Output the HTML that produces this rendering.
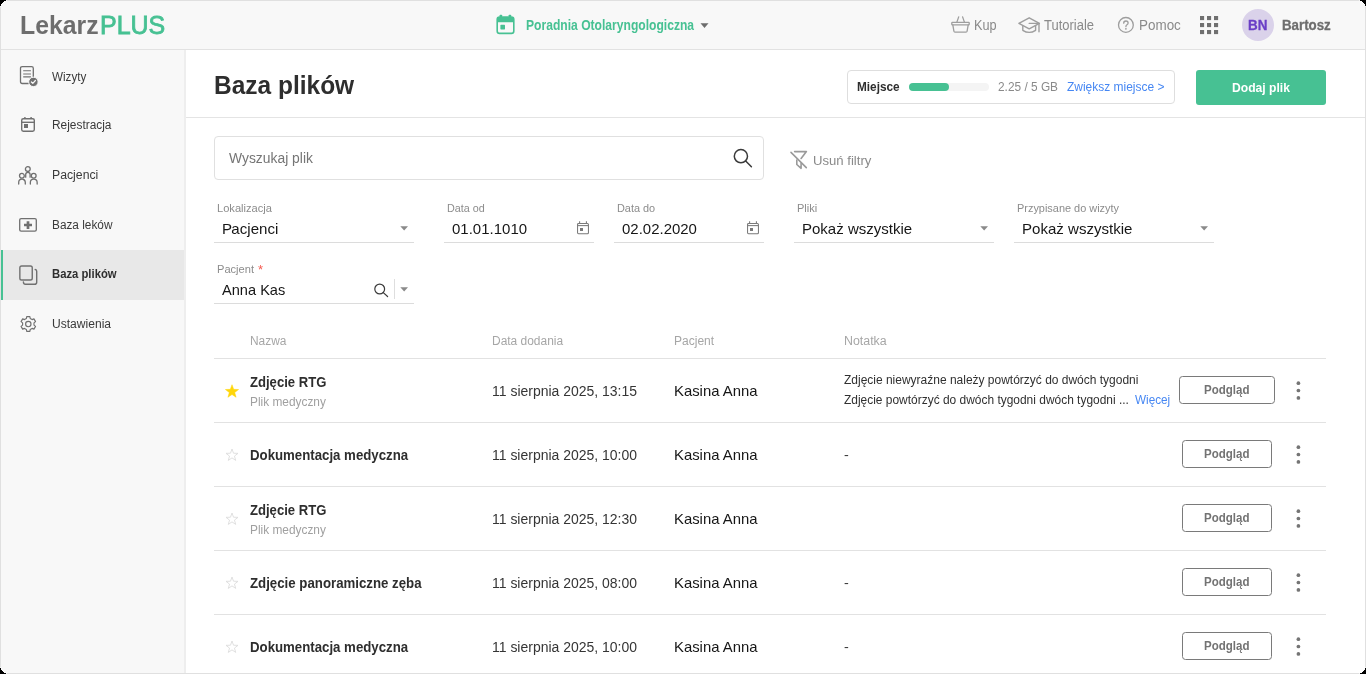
<!DOCTYPE html>
<html lang="pl">
<head>
<meta charset="utf-8">
<title>Baza plików</title>
<style>
*{box-sizing:border-box;margin:0;padding:0}
html,body{width:1366px;height:674px;overflow:hidden;background:#000;font-family:"Liberation Sans",sans-serif;}
#app{will-change:transform;position:absolute;left:0;top:0;width:1366px;height:674px;background:#fff;overflow:hidden;}
#frame{position:absolute;left:0;top:0;width:1366px;height:674px;border:1px solid #e0e0e0;z-index:50;pointer-events:none;}
.cnr{position:absolute;z-index:60;width:8px;height:8px;}
.abs{position:absolute;white-space:nowrap;line-height:1;transform-origin:0 0;}
#topbar{position:absolute;left:0;top:0;width:1366px;height:50px;background:#f8f8f8;border-bottom:1px solid #e2e2e2;}
#sidebar{position:absolute;left:0;top:50px;width:186px;height:624px;background:#f8f8f8;border-right:2px solid #eeeeee;}
#main{position:absolute;left:186px;top:50px;width:1180px;height:624px;background:#fff;}
.ico{position:absolute;overflow:visible;}
.t-act{font-size:14px;color:#8a8a8a;}
.nav{font-size:12px;color:#3a3a3a;}
.lbl{font-size:11px;color:#8c8c8c;}
.val{font-size:15px;color:#161616;}
.ul{position:absolute;height:1px;background:#dcdcdc;}
.th{font-size:12px;color:#a6a6a6;}
.nm{font-size:14px;font-weight:bold;color:#2e2e2e;}
.sub{font-size:12px;color:#a0a0a0;}
.dt{font-size:14px;color:#353535;}
.pt{font-size:15px;color:#161616;}
.nt{font-size:12px;color:#303030;}
.hr{position:absolute;left:214px;width:1112px;height:1px;background:#e2e2e2;}
.btn{position:absolute;border:1px solid #7a7a7a;border-radius:3px;background:#fff;}
.btnt{font-size:12px;font-weight:bold;color:#737373;}
</style>
</head>
<body>
<div id="app">
<div id="topbar">
<div class="abs " id="logo1" style="left:19.90px;top:12.74px;transform:scaleX(0.9919);font-size:25px;font-weight:bold;color:#6e6e6e;">Lekarz</div>
<div class="abs " id="logo2" style="left:99.83px;top:12.74px;transform:scaleX(0.9989);font-size:25px;font-weight:normal;color:#47c193;-webkit-text-stroke:0.8px #47c193;">PLUS</div>
<svg class="ico" style="left:496.00px;top:14.00px" width="19" height="21" viewBox="0 0 19 21" ><rect x="3.7" y="0.7" width="2.4" height="3" rx="0.6" fill="#47c193"/>
<rect x="12.7" y="0.7" width="2.4" height="3" rx="0.6" fill="#47c193"/>
<rect x="1.2" y="3" width="16.6" height="16.4" rx="2.4" fill="none" stroke="#47c193" stroke-width="1.6"/>
<path d="M1.2 5.4 a2.4 2.4 0 0 1 2.4 -2.4 h11.8 a2.4 2.4 0 0 1 2.4 2.4 v2.8 h-16.6 z" fill="#47c193"/>
<rect x="4.4" y="10.8" width="4.6" height="4.6" rx="0.6" fill="#47c193"/></svg>
<div class="abs " id="clinic" style="left:525.78px;top:18.05px;transform:scaleX(0.8644);font-size:14px;font-weight:bold;color:#47c193;">Poradnia Otolaryngologiczna</div>
<svg class="ico" style="left:700.00px;top:23.00px" width="10" height="6" viewBox="0 0 10 6" ><path d="M0.5 0.3 H8.5 L4.5 5 Z" fill="#6d6d6d"/></svg>
<svg class="ico" style="left:950.00px;top:14.00px" width="22" height="20" viewBox="0 0 22 20" fill="none" stroke="#9e9e9e" stroke-width="1.3" stroke-linejoin="round" stroke-linecap="round"><path d="M6.8 8.4 L8.7 2.9 M14.5 8.4 L12.6 2.9"/>
<rect x="1.8" y="8.4" width="17.4" height="2.5" rx="0.6"/>
<path d="M2.8 10.9 L3.9 17.2 Q4.1 18.1 5 18.1 H16 Q16.9 18.1 17.1 17.2 L18.2 10.9"/></svg>
<div class="abs t-act" id="kup" style="left:973.50px;top:18.05px;transform:scaleX(0.9076);">Kup</div>
<svg class="ico" style="left:1017.00px;top:16.00px" width="26" height="20" viewBox="0 0 26 20" fill="none" stroke="#9e9e9e" stroke-width="1.4" stroke-linejoin="round" stroke-linecap="round"><path d="M1.9 7.4 L12.2 1.8 L22.4 7.4 L12.2 12.9 Z"/>
<path d="M5.8 9.8 V14.3 Q12.2 18.4 18.6 14.3 V9.8"/>
<path d="M12.2 7.4 H22 V15.8"/></svg>
<div class="abs t-act" id="tut" style="left:1044.08px;top:18.05px;transform:scaleX(0.9268);">Tutoriale</div>
<svg class="ico" style="left:1116.00px;top:16.00px" width="20" height="20" viewBox="0 0 20 20" ><circle cx="9.9" cy="8.9" r="7.4" fill="none" stroke="#9e9e9e" stroke-width="1.3"/>
<path d="M7.7 7.2 Q7.7 5 9.9 5 Q12.1 5 12.1 7 Q12.1 8.1 11 8.8 Q9.9 9.5 9.9 10.7" fill="none" stroke="#9e9e9e" stroke-width="1.3" stroke-linecap="round"/>
<circle cx="9.9" cy="12.8" r="0.9" fill="#9e9e9e"/></svg>
<div class="abs t-act" id="pomoc" style="left:1138.73px;top:18.05px;transform:scaleX(0.9604);">Pomoc</div>
<svg class="ico" style="left:1199.00px;top:15.00px" width="20" height="20" viewBox="0 0 20 20" fill="#707070"><rect x="1" y="1" width="4.1" height="4.1"/><rect x="8" y="1" width="4.1" height="4.1"/><rect x="15" y="1" width="4.1" height="4.1"/><rect x="1" y="8" width="4.1" height="4.1"/><rect x="8" y="8" width="4.1" height="4.1"/><rect x="15" y="8" width="4.1" height="4.1"/><rect x="1" y="15" width="4.1" height="4.1"/><rect x="8" y="15" width="4.1" height="4.1"/><rect x="15" y="15" width="4.1" height="4.1"/></svg>
<div class="abs" style="left:1242.00px;top:9.00px;width:32px;height:32px;border-radius:50%;background:#dad2ea;"></div>
<div class="abs " id="bn" style="left:1247.74px;top:18.05px;transform:scaleX(0.9599);font-size:14px;font-weight:bold;color:#6a3fc6;-webkit-text-stroke:0.3px #6a3fc6;">BN</div>
<div class="abs " id="bartosz" style="left:1281.65px;top:18.05px;transform:scaleX(0.9495);font-size:14px;font-weight:bold;color:#6e6e6e;-webkit-text-stroke:0.3px #6e6e6e;">Bartosz</div>
</div>
<div id="sidebar">
<div class="abs" style="left:0.00px;top:200.00px;width:184px;height:50px;background:#e8e8e8;"></div>
<div class="abs" style="left:1.00px;top:200.00px;width:2px;height:50px;background:#47c193;"></div>
<svg class="ico" style="left:19.00px;top:15.00px" width="20" height="22" viewBox="0 0 20 22" fill="none" stroke="#707070" stroke-width="1.3"><path d="M9.4 18.5 H3.2 Q1.5 18.5 1.5 16.8 V3.3 Q1.5 1.6 3.2 1.6 H12.6 Q14.3 1.6 14.3 3.3 V11.8" stroke-linecap="round"/>
<path d="M4.2 5.7 H11.9 M4.2 9 H11.9 M4.2 11.9 H11.9" stroke-width="1.1"/>
<circle cx="14.4" cy="16.9" r="4.7" fill="#707070" stroke="#f8f8f8" stroke-width="1"/>
<path d="M12.4 17 L13.8 18.4 L16.4 15.5" stroke="#f8f8f8" stroke-width="1.2" stroke-linecap="round" stroke-linejoin="round"/></svg>
<svg class="ico" style="left:20.00px;top:66.00px" width="17" height="17" viewBox="0 0 17 17" fill="none" stroke="#707070" stroke-width="1.4"><rect x="1.7" y="2.7" width="12.6" height="12.5" rx="1.6"/>
<path d="M1.7 6.3 H14.3"/>
<path d="M4.9 1 V3 M11.1 1 V3"/>
<rect x="4" y="8" width="4" height="4" fill="#707070" stroke="none"/></svg>
<svg class="ico" style="left:17.00px;top:115.00px" width="22" height="20" viewBox="0 0 22 20" fill="none" stroke="#707070" stroke-width="1.3" stroke-linecap="round"><circle cx="10.8" cy="4.1" r="2.4"/>
<circle cx="4.9" cy="10.8" r="2.4"/>
<circle cx="16.7" cy="10.7" r="2.4"/>
<path d="M1.7 19 V17.5 A3.3 3.3 0 0 1 8.3 17.5 V19"/>
<path d="M13.35 19 V17.6 A3.4 3.4 0 0 1 20.15 17.6 V19"/>
<path d="M8.7 12.2 V9.6 A2.2 2.2 0 0 1 13.1 9.6 V12.2"/></svg>
<svg class="ico" style="left:18.00px;top:167.00px" width="20" height="16" viewBox="0 0 20 16" fill="none" stroke="#707070" stroke-width="1.3"><rect x="1.7" y="1.7" width="16.6" height="12.5" rx="1.4"/>
<path d="M10 4.2 V11.9 M6 8 H14" stroke-width="2.7"/></svg>
<svg class="ico" style="left:18.00px;top:214.00px" width="20" height="22" viewBox="0 0 20 22" fill="none" stroke="#707070" stroke-width="1.4" stroke-linecap="round"><rect x="1.85" y="1.95" width="12.4" height="14" rx="1.8"/>
<path d="M5.4 18 Q5.5 20.3 7.4 20.3 H16.6 Q18.7 20.3 18.7 18.2 V7.2 Q18.7 5.6 17.2 5.5"/></svg>
<svg class="ico" style="left:20.00px;top:265.00px" width="17" height="18" viewBox="0 0 17 18" fill="none" stroke="#707070" stroke-width="1.15" stroke-linejoin="round"><path d="M6.72 1.57 L9.88 1.57 L10.21 3.52 L12.09 4.61 L13.95 3.91 L15.53 6.65 L14.00 7.91 L14.00 10.09 L15.53 11.35 L13.95 14.09 L12.09 13.39 L10.21 14.48 L9.88 16.43 L6.72 16.43 L6.39 14.48 L4.51 13.39 L2.65 14.09 L1.07 11.35 L2.60 10.09 L2.60 7.91 L1.07 6.65 L2.65 3.91 L4.51 4.61 L6.39 3.52 Z"/><circle cx="8.3" cy="9" r="2.7"/></svg>
<div class="abs nav" id="n1" style="left:52.20px;top:20.74px;transform:scaleX(0.9697);">Wizyty</div>
<div class="abs nav" id="n2" style="left:51.99px;top:68.74px;transform:scaleX(0.9904);">Rejestracja</div>
<div class="abs nav" id="n3" style="left:52.01px;top:118.74px;transform:scaleX(1.0208);">Pacjenci</div>
<div class="abs nav" id="n4" style="left:51.89px;top:168.74px;transform:scaleX(0.9844);">Baza leków</div>
<div class="abs nav" id="n5" style="left:51.76px;top:217.74px;transform:scaleX(0.9401);font-weight:bold;color:#2e2e2e;">Baza plików</div>
<div class="abs nav" id="n6" style="left:51.99px;top:267.74px;transform:scaleX(1.0059);">Ustawienia</div>
</div>
<div id="main">
<div class="abs " id="title" style="left:27.55px;top:22.74px;transform:scaleX(0.9796);font-size:25px;font-weight:bold;color:#2e2e2e;">Baza plików</div>
<div class="abs" style="left:0.00px;top:67.00px;width:1180px;height:1px;background:#e4e4e4;"></div>
<div class="abs" style="left:661.00px;top:20.00px;width:328px;height:34px;border:1px solid #dedede;border-radius:4px;"></div>
<div class="abs" style="left:723.00px;top:33.00px;width:80px;height:8px;border-radius:4px;background:#f4f4f4;"></div>
<div class="abs" style="left:723.00px;top:33.00px;width:40px;height:8px;border-radius:4px;background:#47c193;"></div>
<div class="abs " id="miejsce" style="left:670.95px;top:30.74px;transform:scaleX(0.9834);font-size:12px;font-weight:bold;color:#2e2e2e;">Miejsce</div>
<div class="abs " id="gb" style="left:811.52px;top:30.74px;transform:scaleX(0.9887);font-size:12px;color:#8a8a8a;">2.25 / 5 GB</div>
<div class="abs " id="zw" style="left:880.80px;top:30.74px;transform:scaleX(0.9974);font-size:12px;color:#4687f3;">Zwiększ miejsce &gt;</div>
<div class="abs" style="left:1010.00px;top:20.00px;width:130px;height:35px;border-radius:3px;background:#47c193;"></div>
<div class="abs " id="dodaj" style="left:1045.60px;top:30.90px;transform:scaleX(0.9333);font-size:13px;font-weight:bold;color:#fff;">Dodaj plik</div>
<div class="abs" style="left:28.00px;top:86.00px;width:550px;height:44px;border:1px solid #e0e0e0;border-radius:4px;"></div>
<div class="abs " id="wysz" style="left:43.49px;top:101.05px;transform:scaleX(0.9913);font-size:14px;color:#757575;">Wyszukaj plik</div>
<svg class="ico" style="left:547.00px;top:98.00px" width="20" height="20" viewBox="0 0 20 20" fill="none" stroke="#3a3a3a" stroke-width="1.5" stroke-linecap="round"><circle cx="7.9" cy="8.2" r="6.6"/><path d="M12.7 13 L18.4 18.7"/></svg>
<svg class="ico" style="left:604.00px;top:100.00px" width="18" height="20" viewBox="0 0 18 20" fill="none" stroke="#9a9a9a" stroke-width="1.6" stroke-linejoin="round" stroke-linecap="round"><path d="M4.6 1.6 H16.4 L11.1 8.5"/>
<path d="M6.8 10 V14.5 L11.1 18.3 V13.2"/>
<path d="M1 2.4 L16.3 17.6"/></svg>
<div class="abs " id="usun" style="left:626.94px;top:103.90px;transform:scaleX(1.0094);font-size:13px;color:#8a8a8a;">Usuń filtry</div>
<div class="abs lbl" id="l1" style="left:31.14px;top:152.59px;transform:scaleX(1.0101);">Lokalizacja</div>
<div class="abs val" id="v1" style="left:36.00px;top:171.20px;transform:scaleX(1.0050);"><span style="letter-spacing:-0.7px">P</span>acjenci</div>
<svg class="ico" style="left:214.00px;top:176.10px" width="9" height="5" viewBox="0 0 9 5" ><path d="M0.3 0.2 H8 L4.15 4.5 Z" fill="#8a8a8a"/></svg>
<div class="abs" style="left:28.00px;top:192.00px;width:200px;height:1px;background:#dcdcdc;"></div>
<div class="abs lbl" id="l2" style="left:260.90px;top:152.59px;transform:scaleX(0.9807);">Data od</div>
<div class="abs val" id="v2" style="left:265.54px;top:171.20px;transform:scaleX(0.9998);">01.01.1010</div>
<svg class="ico" style="left:391.00px;top:171.00px" width="13" height="14" viewBox="0 0 13 14" fill="none" stroke="#7a7a7a" stroke-width="1.05"><rect x="0.55" y="2.4" width="10.9" height="10.3" rx="1"/><path d="M0.55 4.6 H11.45"/><path d="M2.6 0.2 V2.4 M9.4 0.2 V2.4"/><rect x="3" y="7" width="3" height="3" fill="#7a7a7a" stroke="none"/></svg>
<div class="abs" style="left:258.00px;top:192.00px;width:150px;height:1px;background:#dcdcdc;"></div>
<div class="abs lbl" id="l3" style="left:430.84px;top:152.59px;transform:scaleX(0.9909);">Data do</div>
<div class="abs val" id="v3" style="left:436.17px;top:171.20px;transform:scaleX(0.9982);">02.02.2020</div>
<svg class="ico" style="left:561.00px;top:171.00px" width="13" height="14" viewBox="0 0 13 14" fill="none" stroke="#7a7a7a" stroke-width="1.05"><rect x="0.55" y="2.4" width="10.9" height="10.3" rx="1"/><path d="M0.55 4.6 H11.45"/><path d="M2.6 0.2 V2.4 M9.4 0.2 V2.4"/><rect x="3" y="7" width="3" height="3" fill="#7a7a7a" stroke="none"/></svg>
<div class="abs" style="left:428.00px;top:192.00px;width:150px;height:1px;background:#dcdcdc;"></div>
<div class="abs lbl" id="l4" style="left:610.70px;top:152.59px;transform:scaleX(1.0032);">Pliki</div>
<div class="abs val" id="v4" style="left:616.20px;top:171.20px;transform:scaleX(1.0005);">Pokaż wszystkie</div>
<svg class="ico" style="left:794.20px;top:176.10px" width="9" height="5" viewBox="0 0 9 5" ><path d="M0.3 0.2 H8 L4.15 4.5 Z" fill="#8a8a8a"/></svg>
<div class="abs" style="left:608.00px;top:192.00px;width:200px;height:1px;background:#dcdcdc;"></div>
<div class="abs lbl" id="l5" style="left:830.80px;top:152.59px;transform:scaleX(0.9934);">Przypisane do wizyty</div>
<div class="abs val" id="v5" style="left:836.21px;top:171.20px;transform:scaleX(1.0035);">Pokaż wszystkie</div>
<svg class="ico" style="left:1014.20px;top:176.10px" width="9" height="5" viewBox="0 0 9 5" ><path d="M0.3 0.2 H8 L4.15 4.5 Z" fill="#8a8a8a"/></svg>
<div class="abs" style="left:828.00px;top:192.00px;width:200px;height:1px;background:#dcdcdc;"></div>
<div class="abs lbl" id="l6" style="left:31.14px;top:213.59px;transform:scaleX(1.0084);">Pacjent</div>
<div class="abs lbl" id="l6a" style="left:72.10px;top:213.40px;color:#f55a50;font-size:13px;">*</div>
<div class="abs val" id="v6" style="left:35.91px;top:232.20px;transform:scaleX(0.9728);">Anna Kas</div>
<svg class="ico" style="left:188.00px;top:232.50px" width="15" height="14" viewBox="0 0 15 14" fill="none" stroke="#3a3a3a" stroke-width="1.2" stroke-linecap="round"><circle cx="5.7" cy="6" r="4.9"/><path d="M9.3 9.6 L13.6 13.5"/></svg>
<div class="abs" style="left:208.00px;top:229.00px;width:1px;height:20px;background:#dedede;"></div>
<svg class="ico" style="left:214.00px;top:236.80px" width="9" height="5" viewBox="0 0 9 5" ><path d="M0.3 0.2 H8 L4.15 4.5 Z" fill="#8a8a8a"/></svg>
<div class="abs" style="left:28.00px;top:253.00px;width:200px;height:1px;background:#dcdcdc;"></div>
<div class="abs th" id="h1" style="left:64.16px;top:284.74px;transform:scaleX(0.9932);">Nazwa</div>
<div class="abs th" id="h2" style="left:306.16px;top:284.74px;transform:scaleX(0.9963);">Data dodania</div>
<div class="abs th" id="h3" style="left:488.06px;top:284.74px;transform:scaleX(1.0021);">Pacjent</div>
<div class="abs th" id="h4" style="left:658.08px;top:284.74px;transform:scaleX(1.0325);">Notatka</div>
<div class="abs" style="left:28.00px;top:308.00px;width:1112px;height:1px;background:#e2e2e2;"></div>
<div class="abs" style="left:28.00px;top:372.00px;width:1112px;height:1px;background:#e2e2e2;"></div>
<svg class="ico" style="left:38.00px;top:332.00px" width="16" height="16" viewBox="0 0 16 16" ><path d="M8.00 2.70 L9.67 7.34 L14.61 7.50 L10.71 10.53 L12.09 15.27 L8.00 12.50 L3.91 15.27 L5.29 10.53 L1.39 7.50 L6.33 7.34 Z" fill="#ffd60a" stroke="#ffd60a" stroke-width="0.5" stroke-linejoin="round"/></svg>
<div class="abs nm" id="r0n" style="left:63.70px;top:325.05px;transform:scaleX(0.9341);">Zdjęcie RTG</div>
<div class="abs sub" id="r0s" style="left:64.13px;top:345.74px;transform:scaleX(0.9892);">Plik medyczny</div>
<div class="abs dt" id="r0d" style="left:305.68px;top:334.05px;transform:scaleX(0.9983);">11 sierpnia 2025, 13:15</div>
<div class="abs pt" id="r0p" style="left:488.36px;top:333.20px;transform:scaleX(0.9906);">Kasina Anna</div>
<div class="abs nt" id="r0t1" style="left:658.38px;top:323.74px;transform:scaleX(0.9986);">Zdjęcie niewyraźne należy powtórzyć do dwóch tygodni</div>
<div class="abs nt" id="r0t2" style="left:658.38px;top:343.74px;transform:scaleX(0.9956);">Zdjęcie powtórzyć do dwóch tygodni dwóch tygodni ...</div>
<div class="abs nt" id="r0t3" style="left:948.78px;top:343.74px;transform:scaleX(0.9777);color:#4687f3;">Więcej</div>
<div class="abs" style="left:993.00px;top:326.00px;width:95.5px;height:28px;border:1px solid #7a7a7a;border-radius:3.5px;"></div>
<div class="abs btnt" id="r0b" style="left:1017.94px;top:333.74px;transform:scaleX(0.9603);">Podgląd</div>
<svg class="ico" style="left:1109.00px;top:330.00px" width="7" height="20" viewBox="0 0 7 20" fill="#757575"><circle cx="3.4" cy="3.2" r="1.85"/><circle cx="3.4" cy="10.5" r="1.85"/><circle cx="3.4" cy="17.9" r="1.85"/></svg>
<div class="abs" style="left:28.00px;top:436.00px;width:1112px;height:1px;background:#e2e2e2;"></div>
<svg class="ico" style="left:38.00px;top:396.00px" width="16" height="16" viewBox="0 0 16 16" ><path d="M8.00 3.00 L9.52 7.21 L13.99 7.35 L10.46 10.10 L11.70 14.40 L8.00 11.88 L4.30 14.40 L5.54 10.10 L2.01 7.35 L6.48 7.21 Z" fill="none" stroke="#dcdcdc" stroke-width="0.9" stroke-linejoin="round"/></svg>
<div class="abs nm" id="r1n" style="left:63.94px;top:398.05px;transform:scaleX(0.9451);">Dokumentacja medyczna</div>
<div class="abs dt" id="r1d" style="left:305.68px;top:398.05px;transform:scaleX(0.9980);">11 sierpnia 2025, 10:00</div>
<div class="abs pt" id="r1p" style="left:488.36px;top:397.20px;transform:scaleX(0.9906);">Kasina Anna</div>
<div class="abs nt" id="r1t1" style="left:658.32px;top:399.34px;transform:scaleX(1.1936);">-</div>
<div class="abs" style="left:996.00px;top:390.00px;width:90px;height:28px;border:1px solid #7a7a7a;border-radius:3.5px;"></div>
<div class="abs btnt" id="r1b" style="left:1017.94px;top:397.74px;transform:scaleX(0.9603);">Podgląd</div>
<svg class="ico" style="left:1109.00px;top:394.00px" width="7" height="20" viewBox="0 0 7 20" fill="#757575"><circle cx="3.4" cy="3.2" r="1.85"/><circle cx="3.4" cy="10.5" r="1.85"/><circle cx="3.4" cy="17.9" r="1.85"/></svg>
<div class="abs" style="left:28.00px;top:500.00px;width:1112px;height:1px;background:#e2e2e2;"></div>
<svg class="ico" style="left:38.00px;top:460.00px" width="16" height="16" viewBox="0 0 16 16" ><path d="M8.00 3.00 L9.52 7.21 L13.99 7.35 L10.46 10.10 L11.70 14.40 L8.00 11.88 L4.30 14.40 L5.54 10.10 L2.01 7.35 L6.48 7.21 Z" fill="none" stroke="#dcdcdc" stroke-width="0.9" stroke-linejoin="round"/></svg>
<div class="abs nm" id="r2n" style="left:63.70px;top:453.05px;transform:scaleX(0.9341);">Zdjęcie RTG</div>
<div class="abs sub" id="r2s" style="left:64.13px;top:473.74px;transform:scaleX(0.9892);">Plik medyczny</div>
<div class="abs dt" id="r2d" style="left:305.68px;top:462.05px;transform:scaleX(0.9980);">11 sierpnia 2025, 12:30</div>
<div class="abs pt" id="r2p" style="left:488.36px;top:461.20px;transform:scaleX(0.9906);">Kasina Anna</div>
<div class="abs" style="left:996.00px;top:454.00px;width:90px;height:28px;border:1px solid #7a7a7a;border-radius:3.5px;"></div>
<div class="abs btnt" id="r2b" style="left:1017.94px;top:461.74px;transform:scaleX(0.9603);">Podgląd</div>
<svg class="ico" style="left:1109.00px;top:458.00px" width="7" height="20" viewBox="0 0 7 20" fill="#757575"><circle cx="3.4" cy="3.2" r="1.85"/><circle cx="3.4" cy="10.5" r="1.85"/><circle cx="3.4" cy="17.9" r="1.85"/></svg>
<div class="abs" style="left:28.00px;top:564.00px;width:1112px;height:1px;background:#e2e2e2;"></div>
<svg class="ico" style="left:38.00px;top:524.00px" width="16" height="16" viewBox="0 0 16 16" ><path d="M8.00 3.00 L9.52 7.21 L13.99 7.35 L10.46 10.10 L11.70 14.40 L8.00 11.88 L4.30 14.40 L5.54 10.10 L2.01 7.35 L6.48 7.21 Z" fill="none" stroke="#dcdcdc" stroke-width="0.9" stroke-linejoin="round"/></svg>
<div class="abs nm" id="r3n" style="left:64.21px;top:526.05px;transform:scaleX(0.9465);">Zdjęcie panoramiczne zęba</div>
<div class="abs dt" id="r3d" style="left:305.68px;top:526.05px;transform:scaleX(0.9980);">11 sierpnia 2025, 08:00</div>
<div class="abs pt" id="r3p" style="left:488.36px;top:525.20px;transform:scaleX(0.9906);">Kasina Anna</div>
<div class="abs nt" id="r3t1" style="left:658.32px;top:527.34px;transform:scaleX(1.1936);">-</div>
<div class="abs" style="left:996.00px;top:518.00px;width:90px;height:28px;border:1px solid #7a7a7a;border-radius:3.5px;"></div>
<div class="abs btnt" id="r3b" style="left:1017.94px;top:525.74px;transform:scaleX(0.9603);">Podgląd</div>
<svg class="ico" style="left:1109.00px;top:522.00px" width="7" height="20" viewBox="0 0 7 20" fill="#757575"><circle cx="3.4" cy="3.2" r="1.85"/><circle cx="3.4" cy="10.5" r="1.85"/><circle cx="3.4" cy="17.9" r="1.85"/></svg>
<div class="abs" style="left:28.00px;top:628.00px;width:1112px;height:1px;background:#e2e2e2;"></div>
<svg class="ico" style="left:38.00px;top:588.00px" width="16" height="16" viewBox="0 0 16 16" ><path d="M8.00 3.00 L9.52 7.21 L13.99 7.35 L10.46 10.10 L11.70 14.40 L8.00 11.88 L4.30 14.40 L5.54 10.10 L2.01 7.35 L6.48 7.21 Z" fill="none" stroke="#dcdcdc" stroke-width="0.9" stroke-linejoin="round"/></svg>
<div class="abs nm" id="r4n" style="left:63.94px;top:590.05px;transform:scaleX(0.9451);">Dokumentacja medyczna</div>
<div class="abs dt" id="r4d" style="left:305.68px;top:590.05px;transform:scaleX(0.9980);">11 sierpnia 2025, 10:00</div>
<div class="abs pt" id="r4p" style="left:488.36px;top:589.20px;transform:scaleX(0.9906);">Kasina Anna</div>
<div class="abs nt" id="r4t1" style="left:658.32px;top:591.34px;transform:scaleX(1.1936);">-</div>
<div class="abs" style="left:996.00px;top:582.00px;width:90px;height:28px;border:1px solid #7a7a7a;border-radius:3.5px;"></div>
<div class="abs btnt" id="r4b" style="left:1017.94px;top:589.74px;transform:scaleX(0.9603);">Podgląd</div>
<svg class="ico" style="left:1109.00px;top:586.00px" width="7" height="20" viewBox="0 0 7 20" fill="#757575"><circle cx="3.4" cy="3.2" r="1.85"/><circle cx="3.4" cy="10.5" r="1.85"/><circle cx="3.4" cy="17.9" r="1.85"/></svg>
</div>
<div id="frame"></div>
<svg class="cnr" style="left:0;top:0" width="8" height="8" viewBox="0 0 8 8" shape-rendering="crispEdges"><g transform="translate(0,0) scale(1,1)"><rect x="0" y="0" width="6" height="1" fill="#000"/><rect x="0" y="1" width="4" height="1" fill="#000"/><rect x="0" y="2" width="3" height="1" fill="#000"/><rect x="0" y="3" width="2" height="1" fill="#000"/><rect x="0" y="4" width="1" height="1" fill="#000"/><rect x="0" y="5" width="1" height="1" fill="#000"/><rect x="4" y="1" width="1" height="1" fill="#fdfdfd"/><rect x="3" y="2" width="1" height="1" fill="#fdfdfd"/><rect x="2" y="3" width="1" height="1" fill="#fdfdfd"/><rect x="1" y="4" width="1" height="1" fill="#fdfdfd"/><rect x="6" y="0" width="1" height="1" fill="#f2f2f2"/><rect x="0" y="6" width="1" height="1" fill="#f2f2f2"/></g></svg><svg class="cnr" style="right:0;top:0" width="8" height="8" viewBox="0 0 8 8" shape-rendering="crispEdges"><g transform="translate(8,0) scale(-1,1)"><rect x="0" y="0" width="6" height="1" fill="#000"/><rect x="0" y="1" width="4" height="1" fill="#000"/><rect x="0" y="2" width="3" height="1" fill="#000"/><rect x="0" y="3" width="2" height="1" fill="#000"/><rect x="0" y="4" width="1" height="1" fill="#000"/><rect x="0" y="5" width="1" height="1" fill="#000"/><rect x="4" y="1" width="1" height="1" fill="#fdfdfd"/><rect x="3" y="2" width="1" height="1" fill="#fdfdfd"/><rect x="2" y="3" width="1" height="1" fill="#fdfdfd"/><rect x="1" y="4" width="1" height="1" fill="#fdfdfd"/><rect x="6" y="0" width="1" height="1" fill="#f2f2f2"/><rect x="0" y="6" width="1" height="1" fill="#f2f2f2"/></g></svg><svg class="cnr" style="left:0;bottom:0" width="8" height="8" viewBox="0 0 8 8" shape-rendering="crispEdges"><g transform="translate(0,8) scale(1,-1)"><rect x="0" y="0" width="6" height="1" fill="#000"/><rect x="0" y="1" width="4" height="1" fill="#000"/><rect x="0" y="2" width="3" height="1" fill="#000"/><rect x="0" y="3" width="2" height="1" fill="#000"/><rect x="0" y="4" width="1" height="1" fill="#000"/><rect x="0" y="5" width="1" height="1" fill="#000"/><rect x="4" y="1" width="1" height="1" fill="#fdfdfd"/><rect x="3" y="2" width="1" height="1" fill="#fdfdfd"/><rect x="2" y="3" width="1" height="1" fill="#fdfdfd"/><rect x="1" y="4" width="1" height="1" fill="#fdfdfd"/><rect x="6" y="0" width="1" height="1" fill="#f2f2f2"/><rect x="0" y="6" width="1" height="1" fill="#f2f2f2"/></g></svg><svg class="cnr" style="right:0;bottom:0" width="8" height="8" viewBox="0 0 8 8" shape-rendering="crispEdges"><g transform="translate(8,8) scale(-1,-1)"><rect x="0" y="0" width="6" height="1" fill="#000"/><rect x="0" y="1" width="4" height="1" fill="#000"/><rect x="0" y="2" width="3" height="1" fill="#000"/><rect x="0" y="3" width="2" height="1" fill="#000"/><rect x="0" y="4" width="1" height="1" fill="#000"/><rect x="0" y="5" width="1" height="1" fill="#000"/><rect x="4" y="1" width="1" height="1" fill="#fdfdfd"/><rect x="3" y="2" width="1" height="1" fill="#fdfdfd"/><rect x="2" y="3" width="1" height="1" fill="#fdfdfd"/><rect x="1" y="4" width="1" height="1" fill="#fdfdfd"/><rect x="6" y="0" width="1" height="1" fill="#f2f2f2"/><rect x="0" y="6" width="1" height="1" fill="#f2f2f2"/></g></svg>
</div>
</body>
</html>
